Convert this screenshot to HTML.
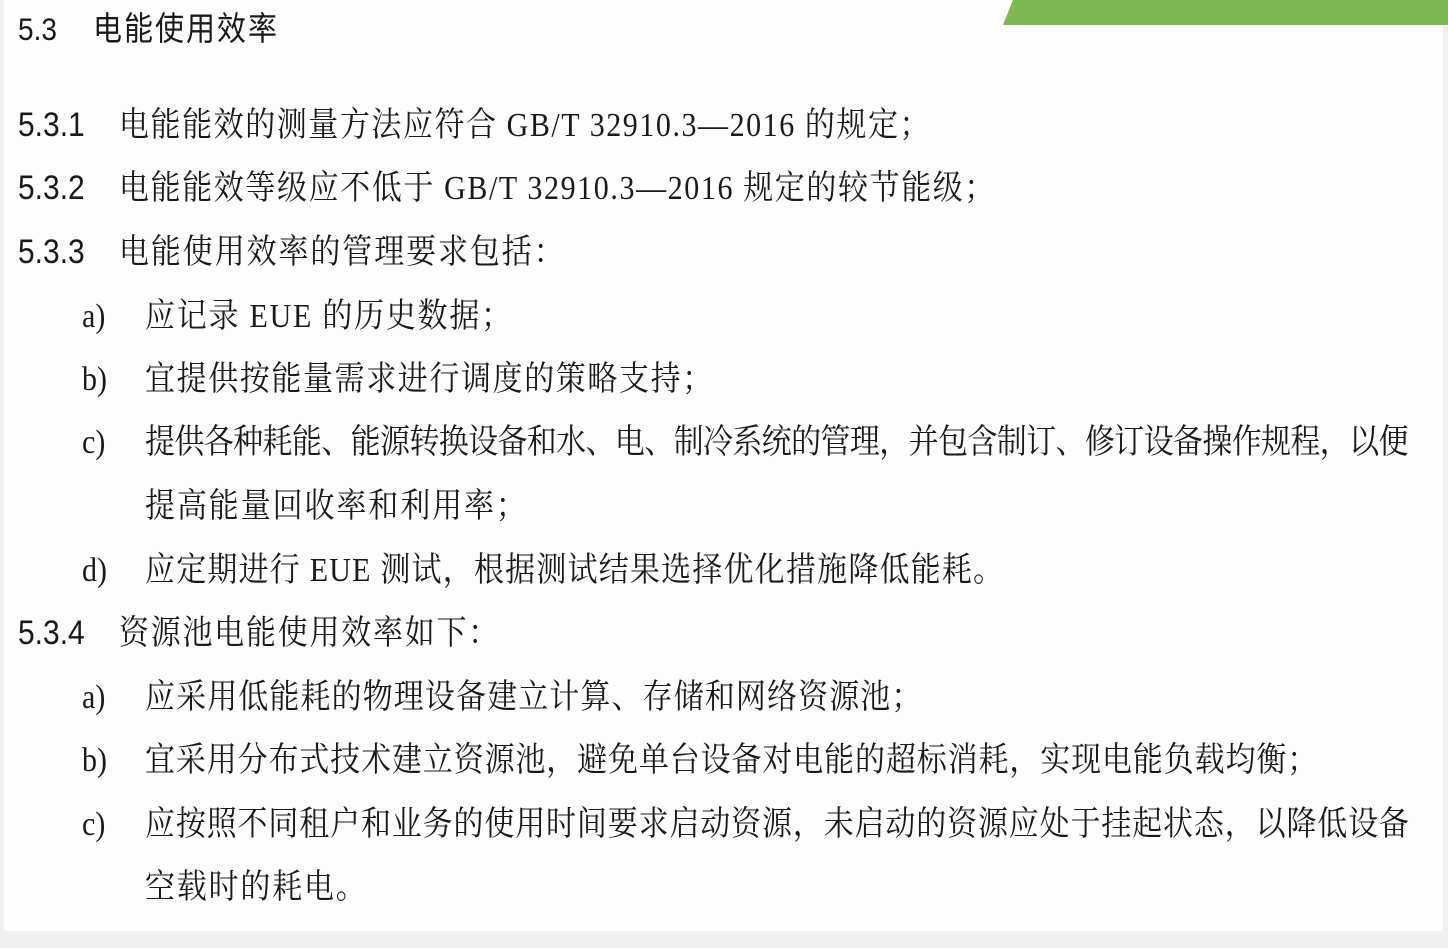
<!DOCTYPE html>
<html><head><meta charset="utf-8"><style>
html,body{margin:0;padding:0;width:1448px;height:948px;overflow:hidden;background:#f0f0f0;}
.page{position:absolute;left:4px;top:0;width:1439px;height:931px;background:#fdfdfd;}
.bar{position:absolute;left:1003px;top:0;width:445px;height:25px;background:#7db851;clip-path:polygon(10px 0,100% 0,100% 100%,0 100%);}
.l{position:absolute;font-family:"Liberation Serif","Noto Serif CJK SC","Noto Sans CJK SC",serif;font-size:30px;line-height:40px;color:#1a1a1a;white-space:nowrap;transform:scaleY(1.13);transform-origin:left center;}
.n{position:absolute;font-family:"Liberation Sans","Noto Sans CJK SC",sans-serif;font-size:30px;line-height:40px;color:#1a1a1a;transform:scaleY(1.13);transform-origin:left center;}
</style></head><body>
<div class="page"></div>
<div class="bar"></div>
<div class="n" style="left:18px;top:10px;font-size:28px">5.3</div>
<div class="l" style="left:93px;top:10px;font-family:'Liberation Sans','Noto Sans CJK SC',sans-serif;font-size:29px;letter-spacing:2px">电能使用效率</div>

<div class="n" style="left:18px;top:106px">5.3.1</div>
<div class="l" style="left:119px;top:106px;letter-spacing:1.55px">电能能效的测量方法应符合 GB/T 32910.3—2016 的规定；</div>
<div class="n" style="left:18px;top:169px">5.3.2</div>
<div class="l" style="left:119px;top:169px;letter-spacing:1.6px">电能能效等级应不低于 GB/T 32910.3—2016 规定的较节能级；</div>
<div class="n" style="left:18px;top:233px">5.3.3</div>
<div class="l" style="left:119px;top:233px;letter-spacing:1.9px">电能使用效率的管理要求包括：</div>
<div class="l" style="left:82px;top:297px">a)</div>
<div class="l" style="left:145px;top:297px;letter-spacing:1.75px">应记录 EUE 的历史数据；</div>
<div class="l" style="left:82px;top:360px">b)</div>
<div class="l" style="left:145px;top:360px;letter-spacing:1.6px">宜提供按能量需求进行调度的策略支持；</div>
<div class="l" style="left:82px;top:423px">c)</div>
<div class="l" style="left:145px;top:423px;letter-spacing:-0.63px">提供各种耗能、能源转换设备和水、电、制冷系统的管理，并包含制订、修订设备操作规程，以便</div>
<div class="l" style="left:145px;top:487px;letter-spacing:1.9px">提高能量回收率和利用率；</div>
<div class="l" style="left:82px;top:551px">d)</div>
<div class="l" style="left:145px;top:551px;letter-spacing:1.2px">应定期进行 EUE 测试，根据测试结果选择优化措施降低能耗。</div>
<div class="n" style="left:18px;top:614px">5.3.4</div>
<div class="l" style="left:119px;top:614px;letter-spacing:1.75px">资源池电能使用效率如下：</div>
<div class="l" style="left:82px;top:678px">a)</div>
<div class="l" style="left:145px;top:678px;letter-spacing:1.1px">应采用低能耗的物理设备建立计算、存储和网络资源池；</div>
<div class="l" style="left:82px;top:741px">b)</div>
<div class="l" style="left:145px;top:741px;letter-spacing:0.87px">宜采用分布式技术建立资源池，避免单台设备对电能的超标消耗，实现电能负载均衡；</div>
<div class="l" style="left:82px;top:805px">c)</div>
<div class="l" style="left:145px;top:805px;letter-spacing:0.85px">应按照不同租户和业务的使用时间要求启动资源，未启动的资源应处于挂起状态，以降低设备</div>
<div class="l" style="left:145px;top:868px;letter-spacing:1.8px">空载时的耗电。</div>
</body></html>
